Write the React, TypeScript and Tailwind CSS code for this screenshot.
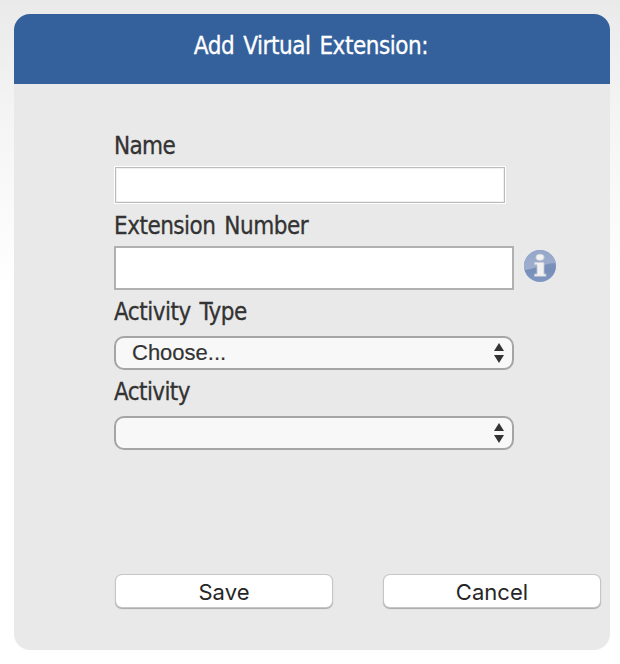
import React from "react";

const labelFont = "font-['DejaVu_Sans_Condensed','DejaVu_Sans',sans-serif] font-stretch-condensed text-[24px] whitespace-nowrap [word-spacing:2.5px] [-webkit-text-stroke:0.3px_currentColor]";

function Label({ text, className }: { text: string; className: string }) {
  return <div className={`${labelFont} text-[#333333] leading-[28px] ${className}`}>{text}</div>;
}

function Select({ value }: { value: string }) {
  return (
    <div className="flex h-[34px] w-[400px] items-center justify-between rounded-[10px] border-2 border-[#a5a5a5] bg-[#f8f8f8] pr-[8px] pl-[16px]">
      <span className="font-['Liberation_Sans',sans-serif] text-[22px] leading-[30px] text-[#333333] [-webkit-text-stroke:0.2px_currentColor]">{value}</span>
      <svg className="-mt-px h-[20px] w-[10px]" viewBox="0 0 10 20" fill="#333333">
        <path d="M5 0L10 8H0ZM0 12H10L5 20Z" />
      </svg>
    </div>
  );
}

function InfoIcon() {
  return (
    <svg className="h-8 w-8" viewBox="0 0 32 32">
      <defs>
        <linearGradient id="disc" x1="0" y1="0" x2="0" y2="1">
          <stop offset="0" stopColor="#8b9fc6" />
          <stop offset="0.6" stopColor="#768eb9" />
          <stop offset="1" stopColor="#8097c2" />
        </linearGradient>
        <linearGradient id="gloss" x1="0" y1="0" x2="0" y2="1">
          <stop offset="0" stopColor="#94a7cb" />
          <stop offset="1" stopColor="#9eaecd" />
        </linearGradient>
        <clipPath id="round"><circle cx="16" cy="16" r="16" /></clipPath>
      </defs>
      <circle cx="16" cy="16" r="16" fill="url(#disc)" />
      <path d="M0 0H32V13C20 13 12 19 0 20Z" fill="url(#gloss)" clipPath="url(#round)" />
      <g fill="#f1f1f2" stroke="#c0c5cf" strokeWidth="0.8">
        <ellipse cx="16" cy="7.3" rx="4.1" ry="3.2" />
        <path d="M10.5 12.3H20V24H22V26.3H10.5V24H13V14.8H10.5Z" />
      </g>
    </svg>
  );
}

function Button({ text }: { text: string }) {
  return (
    <button className="h-[32px] w-[216px] rounded-[6px] bg-white pt-[2px] font-['Inter',sans-serif] text-[22px] leading-[30px] tracking-[0.05px] text-[#262626] shadow-[0_0_0_1px_#c6c6c6,0_1px_1px_1px_#a8a8a8]">
      {text}
    </button>
  );
}

export default function App() {
  return (
    <div className="h-[664px] w-[620px] bg-[linear-gradient(#eaeaea_0px,#f4f4f4_110px,#ffffff_290px)] pt-[14px] pl-[14px]">
      <div className="h-[636px] w-[596px] overflow-hidden rounded-[16px] bg-[#e9e9e9]">
        <div className="flex h-[70px] justify-center bg-[#34619c] pt-[18px] pr-[2px]">
          <span className={`${labelFont} leading-[28px] tracking-[-0.45px] text-white`}>Add Virtual Extension:</span>
        </div>
        <div className="pt-[48px] pl-[100px]">
          <Label text="Name" className="h-[34px] tracking-[-0.65px]" />
          <div className="h-[38px] w-[392px] border border-white">
            <div className="h-[36px] w-[390px] border border-[#bbbbbb] bg-white shadow-[inset_0_0_0_1px_#f0f0f0]" />
          </div>
          <Label text="Extension Number" className="mt-[8px] h-[34px] tracking-[-0.5px]" />
          <div className="flex items-center gap-[10px]">
            <div className="h-[44px] w-[400px] border-2 border-[#b1b1b1] bg-white" />
            <div className="-mt-[8px] h-8 pt-[2px]"><InfoIcon /></div>
          </div>
          <Label text="Activity Type" className="mt-[8px] h-[38px] tracking-[-0.5px]" />
          <Select value="Choose..." />
          <Label text="Activity" className="mt-[8px] h-[38px] tracking-[-0.6px]" />
          <Select value="" />
          <div className="mt-[125px] flex gap-[52px] pl-[2px]">
            <Button text="Save" />
            <Button text="Cancel" />
          </div>
        </div>
      </div>
    </div>
  );
}
